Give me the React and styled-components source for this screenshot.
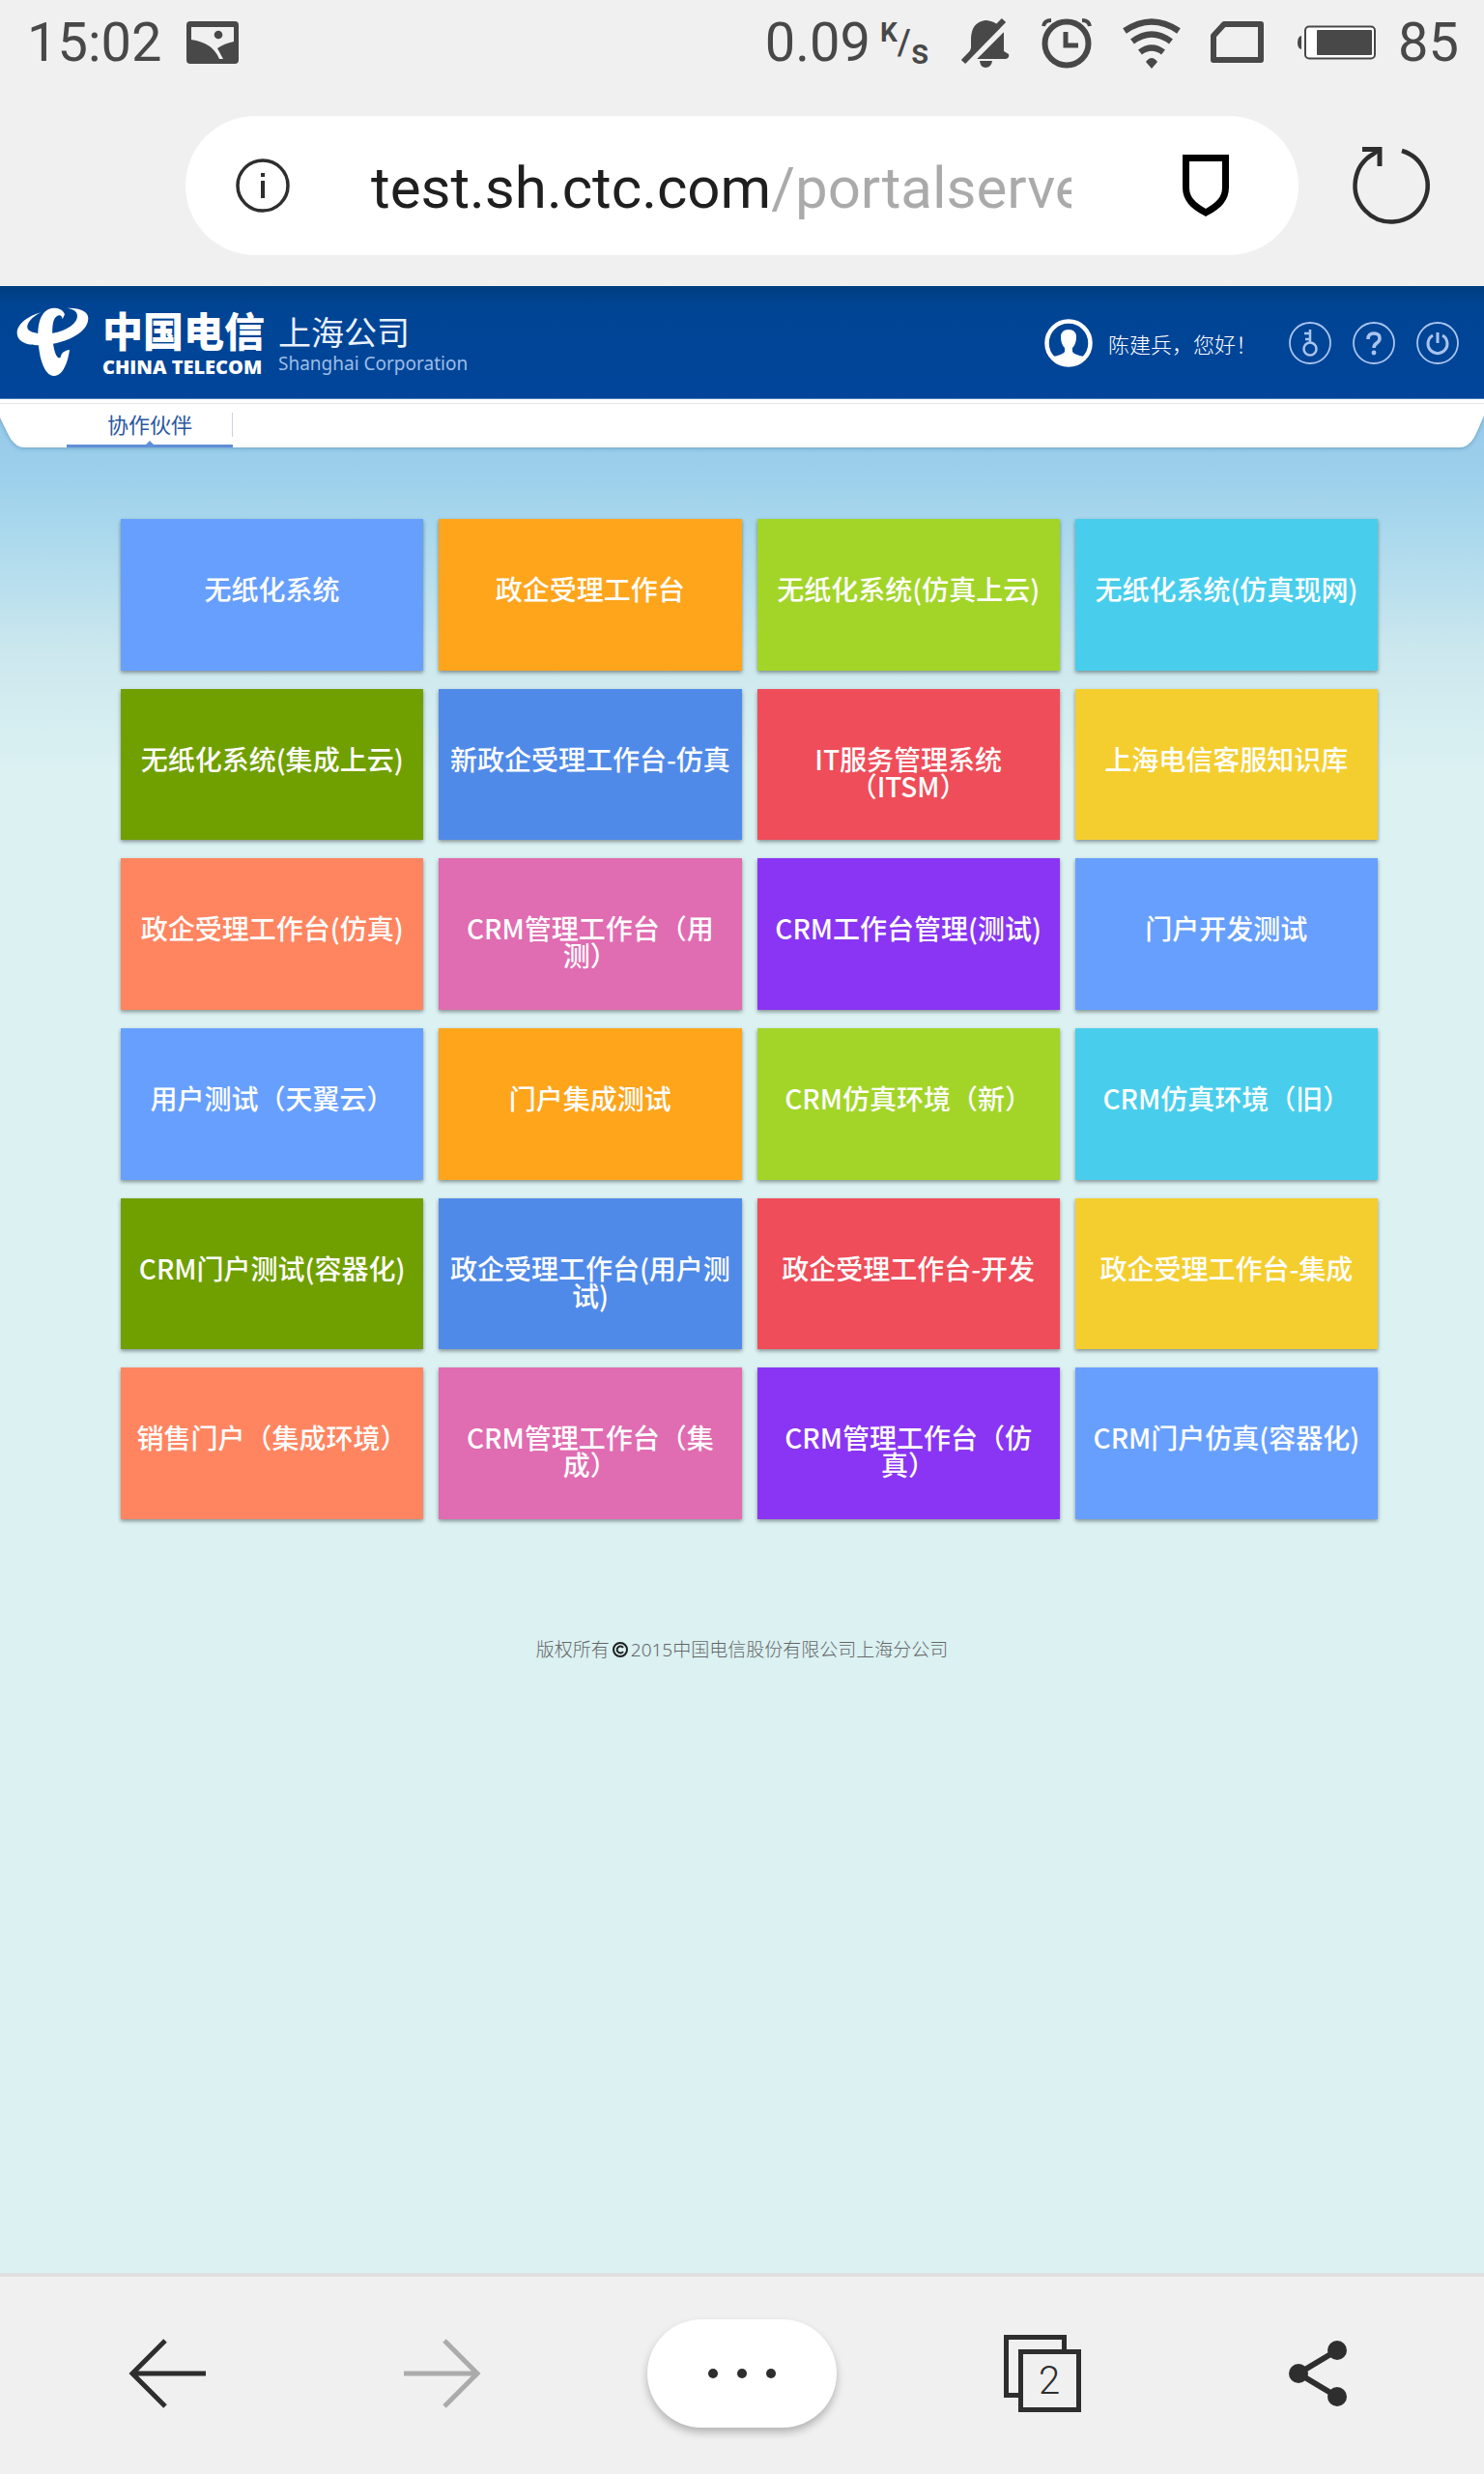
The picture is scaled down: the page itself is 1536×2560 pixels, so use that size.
import React from "react";
import styled, { createGlobalStyle } from "styled-components";

const GlobalStyle = createGlobalStyle`
  *, *::before, *::after { box-sizing: border-box; }
  body { margin: 0; background: #f0f0f0; }
  button { padding: 0; border: 0; background: none; color: inherit; font: inherit; cursor: pointer; }
  a { color: inherit; text-decoration: none; }
  svg { display: block; flex: none; overflow: visible; }
`;

const roboto = `Roboto, "Noto Sans CJK SC", sans-serif`;
const cjk = `"Noto Sans CJK SC", "Noto Sans", sans-serif`;

const Screen = styled.div`
  display: flex;
  flex-direction: column;
  min-height: 100vh;
  font-family: ${roboto};
`;

/* ---------- status bar ---------- */
const StatusBar = styled.div`
  display: flex;
  align-items: center;
  justify-content: space-between;
  height: 88px;
  padding: 0 26px 0 28px;
  color: #484848;
  font-size: 56px;
  line-height: 64px;
`;
const StatusGroup = styled.div`
  display: flex;
  align-items: center;
  gap: ${(p) => p.$gap}px;
`;
const Rate = styled.span`
  display: flex;
  height: 44px;
  width: 50px;
  font-size: 28px;
  font-weight: 700;
  line-height: 24px;
`;
const RateOver = styled.span`
  align-self: flex-start;
`;
const RateSlash = styled.span`
  align-self: center;
  font-size: 36px;
  font-weight: 500;
`;
const RateUnder = styled.span`
  align-self: flex-end;
  font-size: 36px;
  font-weight: 500;
`;

/* ---------- address bar ---------- */
const Toolbar = styled.div`
  display: flex;
  align-items: center;
  gap: 56px;
  padding: 32px 56px 32px 192px;
`;
const AddressPill = styled.div`
  display: flex;
  flex: 1;
  align-items: center;
  min-width: 0;
  height: 144px;
  padding: 0 72px 0 52px;
  border-radius: 72px;
  background: #fff;
`;
const AddressInput = styled.input`
  flex: 1;
  min-width: 0;
  height: 84px;
  margin: 0 115px 0 84px;
  padding: 4px 0 0;
  border: 0;
  outline: 0;
  color: #222;
  background: linear-gradient(90deg, #1f1f1f 414px, #aaa 414px);
  background-clip: text;
  -webkit-text-fill-color: transparent;
  font-family: ${roboto};
  font-size: 60px;
  line-height: 80px;
`;

/* ---------- portal page ---------- */
const Portal = styled.main`
  display: flex;
  flex: 1;
  flex-direction: column;
  background: linear-gradient(#95c9e9 117px, #9bcfeb 190px, #a9d8ed 250px, #cce8ee 380px, #dbf1f2 500px, #dbf1f2);
  font-family: ${cjk};
`;
const Header = styled.header`
  display: flex;
  align-items: center;
  justify-content: space-between;
  height: 117px;
  padding: 2px 26px 0 17px;
  border-bottom: 1px solid #4a7fc0;
  background: linear-gradient(#003d7f, #004494 20px, #00459a);
  color: #fff;
`;
const Brand = styled.a`
  display: flex;
  align-items: center;
  gap: 14px;
`;
const BrandText = styled.span`
  display: flex;
  flex-direction: column;
  white-space: nowrap;
`;
const BrandName = styled.span`
  font-size: 42px;
  font-weight: 900;
  line-height: 50px;
`;
const BrandLatin = styled.span`
  font-family: "Open Sans", sans-serif;
  font-size: 20px;
  font-weight: 800;
  line-height: 28px;
`;
const BranchName = styled.span`
  color: #eaf2ff;
  font-size: 34px;
  line-height: 42px;
`;
const BranchLatin = styled.span`
  color: #9dbde6;
  font-family: "Noto Sans", sans-serif;
  font-size: 19px;
  line-height: 24px;
`;
const UserArea = styled.div`
  display: flex;
  align-items: center;
`;
const Greeting = styled.span`
  margin: 0 33px 0 16px;
  font-size: 22px;
  font-weight: 300;
  line-height: 32px;
`;
const Actions = styled.div`
  display: flex;
  gap: 22px;
`;

const TabStrip = styled.nav`
  position: relative;
  display: flex;
  height: 50px;
  padding-left: 69px;
`;
const StripShape = styled.div`
  position: absolute;
  inset: 0;
  display: flex;
  filter: drop-shadow(0 1px 2px rgba(30, 80, 130, 0.35));
`;
const StripFill = styled.div`
  flex: 1;
  background: #fff;
`;
const StripLine = styled.div`
  position: absolute;
  inset: 4px 0 auto;
  height: 1px;
  background: #e2e4e8;
`;
const Tab = styled.a`
  position: relative;
  display: flex;
  align-items: center;
  justify-content: center;
  width: 172px;
  padding-top: 2px;
  border-bottom: 3px solid #5f8fd6;
  color: #2a57a0;
  font-size: 22px;
  line-height: 32px;

  &::before {
    content: "";
    position: absolute;
    right: 0;
    top: 14px;
    width: 1px;
    height: 25px;
    background: #cdd3de;
  }
  &::after {
    content: "";
    position: absolute;
    bottom: 0;
    left: 50%;
    margin-left: -4px;
    border: 4px solid transparent;
    border-top: 0;
    border-bottom-color: #5f8fd6;
  }
`;

const TileGrid = styled.ul`
  display: grid;
  grid-template-columns: repeat(4, 1fr);
  gap: 19px 16px;
  margin: 0;
  padding: 74px 110px 0 125px;
  list-style: none;
`;
const Tile = styled.a`
  display: block;
  aspect-ratio: 2 / 1;
  padding: 58px 10px 0;
  background: ${(p) => p.$color};
  box-shadow: 0 2px 4px rgba(0, 0, 0, 0.4);
  color: #fff;
  font-size: 28px;
  font-weight: 500;
  line-height: 28px;
  text-align: center;
`;
const Copyright = styled.footer`
  display: flex;
  align-items: center;
  justify-content: center;
  gap: 2px;
  padding-top: 121px;
  color: #666;
  font-family: "Noto Sans", "Noto Sans CJK SC", sans-serif;
  font-size: 19px;
  font-weight: 300;
  line-height: 28px;
`;

/* ---------- browser bottom bar ---------- */
const BottomBar = styled.nav`
  display: grid;
  grid-template-columns: 1fr 1fr 336px 1fr 1fr;
  align-items: center;
  justify-items: center;
  height: 208px;
  padding: 0 30px 4px;
  border-top: 4px solid #e0e0e0;
  background: #f0f0f0;
  color: #2e2e2e;
`;
const MenuButton = styled.button`
  display: flex;
  align-items: center;
  justify-content: center;
  gap: 20px;
  width: 196px;
  height: 112px;
  border-radius: 56px;
  background: #fff;
  box-shadow: 0 5px 8px rgba(0, 0, 0, 0.25);
`;
const Dot = styled.i`
  width: 10px;
  height: 10px;
  border-radius: 50%;
  background: #2e2e2e;
`;
const TabsButton = styled.button`
  position: relative;
  width: 80px;
  height: 80px;
`;
const TabCount = styled.span`
  position: absolute;
  right: 0;
  bottom: 0;
  width: 65px;
  height: 65px;
  border: 5px solid #2e2e2e;
  font-size: 40px;
  font-weight: 300;
  line-height: 55px;
  text-align: center;
`;

const PictureIcon = () => (
  <svg width="54" height="44" viewBox="0 0 54 44">
    <rect width="54" height="44" rx="4" fill="#484848" />
    <path d="M5 6H49V21Q39 23 32 28L38 39H34Q27 22 5 19Z" fill="#f0f0f0" />
    <circle cx="33" cy="14" r="4.3" fill="#484848" />
  </svg>
);
const MutedIcon = () => (
  <svg width="52" height="52" viewBox="0 0 52 52">
    <path d="M28 3C15 4 12 13 12 24V31C11 37 8 39 4 43H48Q52 42 51 38L46 35V16L40 8Q36 4 28 3Z" fill="#484848" />
    <path d="M21 45H34Q33 52 27 52Q22 52 21 45Z" fill="#484848" />
    <path d="M9 48 48 9" stroke="#f0f0f0" strokeWidth="6" />
    <path d="M4 46 46 3" stroke="#484848" strokeWidth="6" />
  </svg>
);
const AlarmIcon = () => (
  <svg width="52" height="52" viewBox="-1 0 52 52" fill="none" stroke="#484848">
    <circle cx="26" cy="27" r="22.5" strokeWidth="6" />
    <path d="M25 15V29H38" strokeWidth="5" />
    <path d="M2 9Q3 3 10 3M42 3Q49 3 50 9" strokeWidth="4" />
  </svg>
);
const WifiIcon = () => (
  <svg width="62" height="52" viewBox="0 0 62 52" fill="none" stroke="#484848" strokeWidth="6.5">
    <path d="M3 14Q31-5 59 14M11 25Q31 10 51 25M19 36Q31 27 43 36" />
    <path d="M31 53 25 46Q31 38 37 46Z" fill="#484848" stroke="none" />
  </svg>
);
const SimIcon = () => (
  <svg width="56" height="44" viewBox="2 0 56 44" fill="none" stroke="#484848" strokeWidth="6">
    <path d="M14 3H52V40H3V15Z" strokeLinejoin="round" />
  </svg>
);
const BatteryIcon = () => (
  <svg width="82" height="36" viewBox="0 0 82 36">
    <rect x="8" y="1.5" width="72" height="33" rx="4" fill="#fff" stroke="#484848" strokeWidth="2" />
    <rect x="20" y="5" width="57" height="26" rx="1" fill="#484848" />
    <path d="M4 11Q0 12 0 18T4 25Z" fill="#484848" />
  </svg>
);
const InfoIcon = () => (
  <svg width="56" height="56" viewBox="0 0 56 56" fill="none" stroke="#2e2e2e">
    <circle cx="28" cy="28" r="26" strokeWidth="3.5" />
    <path d="M28 23V41M28 15V19" strokeWidth="4" />
  </svg>
);
const ShieldIcon = () => (
  <svg width="48" height="64" viewBox="0 0 48 64" fill="none" stroke="#000" strokeWidth="7">
    <path d="M3.5 3.5H44.5V34C44.5 46 37 53 24 60C11 53 3.5 46 3.5 34Z" />
  </svg>
);
const ReloadIcon = () => (
  <svg width="80" height="80" viewBox="0 0 80 80" fill="none" stroke="#2e2e2e" strokeWidth="4.5">
    <path d="M51 4A37.5 37.5 0 1 1 22 7L28 2" />
    <path d="M10 2.5H28V20" strokeWidth="5" />
  </svg>
);
const TelecomMark = () => (
  <svg width="75" height="72" viewBox="50 84 225 216" fill="#fff">
    <path d="M127 97C85 107 52 135 52 160C52 190 85 200 125 199C190 197 273 165 273 115C273 95 250 82 208 83C235 88 242 100 238 115C232 140 185 162 150 163C110 164 80 158 84 138C88 122 105 107 127 97Z" />
    <path d="M200 103C195 88 180 83 165 83C135 85 117 115 117 165C117 230 135 294 167 294C195 294 210 250 215 213C200 215 190 222 188 233C184 245 172 235 167 210C160 170 157 115 178 107C188 103 192 110 193 118Z" />
  </svg>
);
const AvatarIcon = () => (
  <svg width="50" height="50" viewBox="0 0 50 50">
    <circle cx="25" cy="25" r="22.5" fill="none" stroke="#fff" strokeWidth="4.5" />
    <path d="M9 39Q19 37 21 34V30Q17 26 17 19Q17 11 25 11Q33 11 33 19Q33 26 29 30V34Q31 37 41 39Q35 47 25 47Q15 47 9 39Z" fill="#fff" />
  </svg>
);
const ActionIcon = ({ children }) => (
  <svg width="44" height="44" viewBox="0 0 44 44" fill="none" stroke="#a9c4ee" strokeWidth="2.5">
    <circle cx="22" cy="22" r="21" strokeWidth="1.8" />
    {children}
  </svg>
);
const CopyrightIcon = () => (
  <svg width="18" height="18" viewBox="0 0 18 18" fill="none" stroke="#1c1f1f" strokeWidth="2">
    <circle cx="9" cy="9" r="7" />
    <path d="M12 7A3.5 3.5 0 1 0 12 11" />
  </svg>
);
const ArrowIcon = ({ color, flip }) => (
  <svg width="80" height="72" viewBox="0 0 80 72" fill="none" stroke={color} strokeWidth="5">
    <path d={flip ? "M42 2 76 36 42 70M0 36H76" : "M38 2 4 36 38 70M4 36H80"} />
  </svg>
);
const TabsBackIcon = () => (
  <svg width="80" height="80" viewBox="0 0 80 80" fill="none" stroke="#2e2e2e" strokeWidth="5">
    <path d="M17 62.5H2.5V2.5H62.5V17" />
  </svg>
);
const ShareIcon = () => (
  <svg width="60" height="68" viewBox="0 0 60 68" fill="#2e2e2e">
    <path d="M50 10 10 34 50 58" fill="none" stroke="#2e2e2e" strokeWidth="6" />
    <circle cx="50" cy="10" r="10" />
    <circle cx="10" cy="34" r="10" />
    <circle cx="50" cy="58" r="10" />
  </svg>
);

const palette = [
  "#679ffe", "#fea51c", "#a2d528", "#48ceec",
  "#709f00", "#508ae8", "#ee4d59", "#f4ce2f",
  "#ff8560", "#e06cb1", "#8935f3", "#679ffe",
];
const systems = [
  "无纸化系统", "政企受理工作台", "无纸化系统(仿真上云)", "无纸化系统(仿真现网)",
  "无纸化系统(集成上云)", "新政企受理工作台-仿真", "IT服务管理系统（ITSM）", "上海电信客服知识库",
  "政企受理工作台(仿真)", "CRM管理工作台（用测）", "CRM工作台管理(测试)", "门户开发测试",
  "用户测试（天翼云）", "门户集成测试", "CRM仿真环境（新）", "CRM仿真环境（旧）",
  "CRM门户测试(容器化)", "政企受理工作台(用户测试)", "政企受理工作台-开发", "政企受理工作台-集成",
  "销售门户（集成环境）", "CRM管理工作台（集成）", "CRM管理工作台（仿真）", "CRM门户仿真(容器化)",
];

export default function App() {
  return (
    <Screen>
      <GlobalStyle />
      <StatusBar>
        <StatusGroup $gap={26}>
          <span>15:02</span>
          <PictureIcon />
        </StatusGroup>
        <StatusGroup $gap={32}>
          <StatusGroup $gap={10}>
            <span>0.09</span>
            <Rate>
              <RateOver>K</RateOver>
              <RateSlash>/</RateSlash>
              <RateUnder>s</RateUnder>
            </Rate>
          </StatusGroup>
          <MutedIcon />
          <AlarmIcon />
          <WifiIcon />
          <SimIcon />
          <StatusGroup $gap={22}>
            <BatteryIcon />
            <span>85</span>
          </StatusGroup>
        </StatusGroup>
      </StatusBar>

      <Toolbar>
        <AddressPill>
          <button aria-label="网站信息"><InfoIcon /></button>
          <AddressInput aria-label="网址" type="text" defaultValue="test.sh.ctc.com/portalserver" />
          <button aria-label="安全"><ShieldIcon /></button>
        </AddressPill>
        <button aria-label="刷新"><ReloadIcon /></button>
      </Toolbar>

      <Portal>
        <Header>
          <Brand href="#">
            <TelecomMark />
            <BrandText>
              <BrandName>中国电信</BrandName>
              <BrandLatin>CHINA TELECOM</BrandLatin>
            </BrandText>
            <BrandText>
              <BranchName>上海公司</BranchName>
              <BranchLatin>Shanghai Corporation</BranchLatin>
            </BrandText>
          </Brand>
          <UserArea>
            <AvatarIcon />
            <Greeting>陈建兵，您好！</Greeting>
            <Actions>
              <button aria-label="修改密码">
                <ActionIcon>
                  <circle cx="22" cy="28" r="6.5" />
                  <path d="M22 22V8M22 12H16M22 18H17" />
                </ActionIcon>
              </button>
              <button aria-label="帮助">
                <ActionIcon>
                  <path d="M16 18Q16 12 22 12Q28 12 28 17Q28 20 25 22Q22 24 22 27" strokeWidth="3.5" />
                  <circle cx="22" cy="32" r="1.2" />
                </ActionIcon>
              </button>
              <button aria-label="退出">
                <ActionIcon>
                  <path d="M17 14A10 10 0 1 0 27 14M22 11V22" strokeWidth="3" />
                </ActionIcon>
              </button>
            </Actions>
          </UserArea>
        </Header>

        <TabStrip>
          <StripShape>
            <svg width="25" height="50" viewBox="0 0 25 50">
              <path d="M0 0H25V50Q17 50 11 41Q8 36 0 19Z" fill="#fff" />
            </svg>
            <StripFill />
            <svg width="25" height="50" viewBox="0 0 25 50">
              <path d="M25 0H0V50Q8 50 14 41Q17 36 25 17Z" fill="#fff" />
            </svg>
          </StripShape>
          <StripLine />
          <Tab href="#">协作伙伴</Tab>
        </TabStrip>

        <TileGrid>
          {systems.map((name, i) => (
            <li key={name}>
              <Tile href="#" $color={palette[i % palette.length]}>{name}</Tile>
            </li>
          ))}
        </TileGrid>

        <Copyright>
          <span>版权所有</span>
          <CopyrightIcon />
          <span>2015中国电信股份有限公司上海分公司</span>
        </Copyright>
      </Portal>

      <BottomBar>
        <button aria-label="后退"><ArrowIcon color="#2e2e2e" /></button>
        <button aria-label="前进"><ArrowIcon color="#ababab" flip /></button>
        <MenuButton aria-label="菜单"><Dot /><Dot /><Dot /></MenuButton>
        <TabsButton aria-label="标签页">
          <TabsBackIcon />
          <TabCount>2</TabCount>
        </TabsButton>
        <button aria-label="分享"><ShareIcon /></button>
      </BottomBar>
    </Screen>
  );
}
